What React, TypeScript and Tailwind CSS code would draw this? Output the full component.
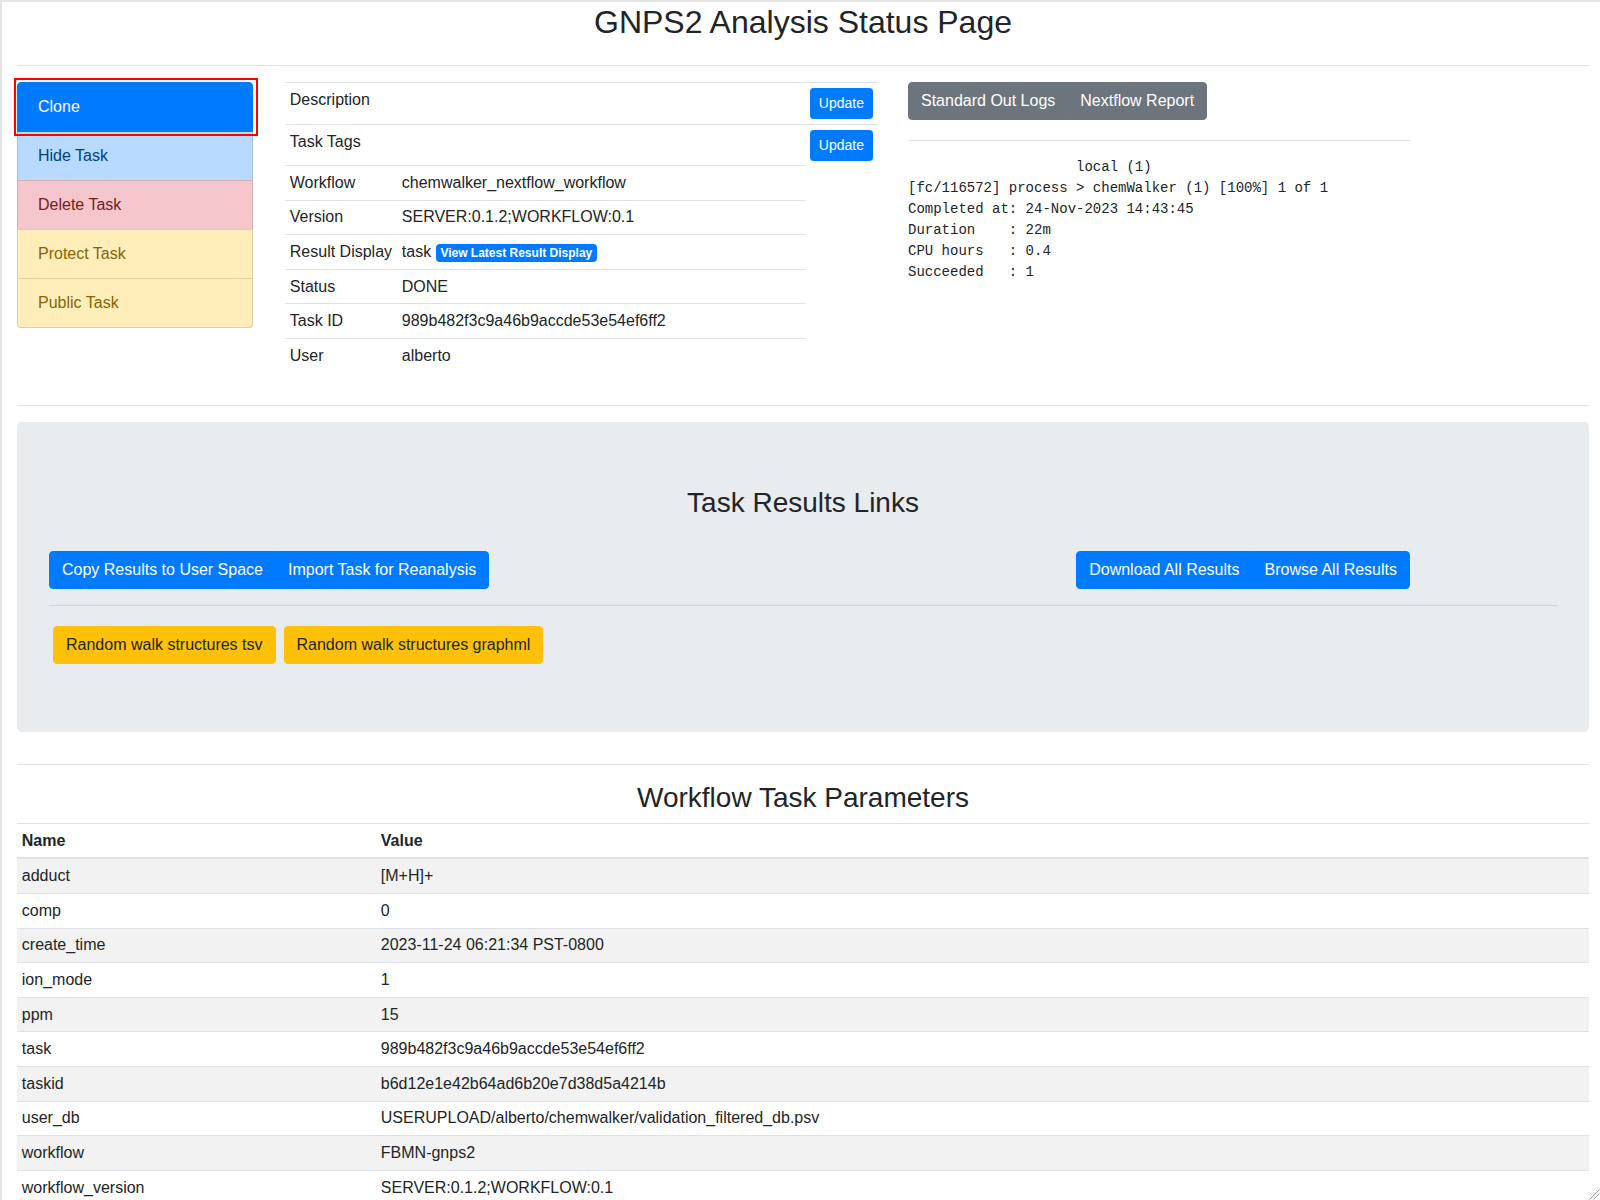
import React from "react";

const params: [string, string][] = [
  ["adduct", "[M+H]+"],
  ["comp", "0"],
  ["create_time", "2023-11-24 06:21:34 PST-0800"],
  ["ion_mode", "1"],
  ["ppm", "15"],
  ["task", "989b482f3c9a46b9accde53e54ef6ff2"],
  ["taskid", "b6d12e1e42b64ad6b20e7d38d5a4214b"],
  ["user_db", "USERUPLOAD/alberto/chemwalker/validation_filtered_db.psv"],
  ["workflow", "FBMN-gnps2"],
  ["workflow_version", "SERVER:0.1.2;WORKFLOW:0.1"],
];

const info: [string, React.ReactNode][] = [
  ["Workflow", "chemwalker_nextflow_workflow"],
  ["Version", "SERVER:0.1.2;WORKFLOW:0.1"],
  [
    "Result Display",
    <>
      task{" "}
      <a className="inline-block rounded-[4px] bg-[#007bff] px-[4.8px] py-[3px] align-baseline text-[12px] font-bold leading-none text-white">
        View Latest Result Display
      </a>
    </>,
  ],
  ["Status", "DONE"],
  ["Task ID", "989b482f3c9a46b9accde53e54ef6ff2"],
  ["User", "alberto"],
];

const logText = `                    local (1)
[fc/116572] process > chemWalker (1) [100%] 1 of 1
Completed at: 24-Nov-2023 14:43:45
Duration    : 22m
CPU hours   : 0.4
Succeeded   : 1`;

export default function App() {
  return (
    <div className="relative h-[1200px] overflow-hidden border-l-2 border-t-2 border-[#e4e4e4] bg-white font-['Liberation_Sans',Arial,sans-serif] text-[16px] leading-6 text-[#212529]">
      <div className="pl-[15px] pr-[11px]">
        <h2 className="mb-6 mt-px text-center text-[32px] font-normal leading-[1.2]">
          GNPS2 Analysis Status Page
        </h2>
        <hr className="my-4 border-0 border-t border-black/10" />

        <div className="flex items-start">
          {/* Left action list */}
          <div className="relative w-[236px] shrink-0">
            <div className="pointer-events-none absolute left-[-3px] top-[-4px] z-20 h-[58px] w-[244px] border-2 border-[#ff0000]" />
            <div className="flex flex-col">
              <div className="relative z-10 -mb-px rounded-t-[4px] border border-[#007bff] bg-[#007bff] px-5 py-3 text-white">
                Clone
              </div>
              <div className="-mb-px border border-black/[.125] bg-[#b8daff] px-5 py-3 text-[#004085]">
                Hide Task
              </div>
              <div className="-mb-px border border-black/[.125] bg-[#f5c6cb] px-5 py-3 text-[#721c24]">
                Delete Task
              </div>
              <div className="-mb-px border border-black/[.125] bg-[#ffeeba] px-5 py-3 text-[#856404]">
                Protect Task
              </div>
              <div className="rounded-b-[4px] border border-black/[.125] bg-[#ffeeba] px-5 py-3 text-[#856404]">
                Public Task
              </div>
            </div>
          </div>

          {/* Middle info table */}
          <table className="mb-4 ml-8 w-[593px] shrink-0 table-fixed border-collapse">
            <colgroup>
              <col className="w-[112px]" />
              <col className="w-[408px]" />
              <col className="w-[73px]" />
            </colgroup>
            <tbody>
              {["Description", "Task Tags"].map((l) => (
                <tr key={l}>
                  <td className="whitespace-nowrap border-t border-[#dee2e6] p-[0.3rem] align-top">{l}</td>
                  <td className="border-t border-[#dee2e6] p-[0.3rem] align-top"></td>
                  <td className="border-t border-[#dee2e6] p-[0.3rem] align-top">
                    <button className="rounded-[3.2px] border border-[#007bff] bg-[#007bff] px-2 py-1 text-[14px] leading-[21px] text-white">
                      Update
                    </button>
                  </td>
                </tr>
              ))}
              {info.map(([l, v]) => (
                <tr key={l}>
                  <td className="whitespace-nowrap border-t border-[#dee2e6] p-[0.3rem] align-top">{l}</td>
                  <td className="whitespace-nowrap border-t border-[#dee2e6] p-[0.3rem] align-top">{v}</td>
                </tr>
              ))}
            </tbody>
          </table>

          {/* Right logs */}
          <div className="ml-[30px] w-[503px] shrink-0">
            <div className="flex w-fit">
              <button className="rounded-l-[4px] border border-[#6c757d] bg-[#6c757d] px-3 py-1.5 leading-6 text-white">
                Standard Out Logs
              </button>
              <button className="-ml-px rounded-r-[4px] border border-[#6c757d] bg-[#6c757d] px-3 py-1.5 leading-6 text-white">
                Nextflow Report
              </button>
            </div>
            <hr className="mb-4 mt-5 border-0 border-t border-black/10" />
            <pre className="m-0 font-['Liberation_Mono','Courier_New',monospace] text-[14px] leading-[21px] text-[#212529]">
              {logText}
            </pre>
          </div>
        </div>

        <hr className="my-4 border-0 border-t border-black/10" />

        {/* Jumbotron */}
        <div className="mb-8 rounded-[4.8px] bg-[#e9ecef] px-8 py-16">
          <h3 className="mb-2 text-center text-[28px] font-normal leading-[1.2]">Task Results Links</h3>
          <div className="mt-8 flex items-start justify-between pr-[147px]">
            <div className="flex">
              <button className="rounded-l-[4px] border border-[#007bff] bg-[#007bff] px-3 py-1.5 leading-6 text-white">
                Copy Results to User Space
              </button>
              <button className="-ml-px rounded-r-[4px] border border-[#007bff] bg-[#007bff] px-3 py-1.5 leading-6 text-white">
                Import Task for Reanalysis
              </button>
            </div>
            <div className="flex">
              <button className="rounded-l-[4px] border border-[#007bff] bg-[#007bff] px-3 py-1.5 leading-6 text-white">
                Download All Results
              </button>
              <button className="-ml-px rounded-r-[4px] border border-[#007bff] bg-[#007bff] px-3 py-1.5 leading-6 text-white">
                Browse All Results
              </button>
            </div>
          </div>
          <hr className="my-4 border-0 border-t border-black/10" />
          <div className="flex gap-2 p-1">
            <button className="rounded-[4px] border border-[#ffc107] bg-[#ffc107] px-3 py-1.5 leading-6 text-[#212529]">
              Random walk structures tsv
            </button>
            <button className="rounded-[4px] border border-[#ffc107] bg-[#ffc107] px-3 py-1.5 leading-6 text-[#212529]">
              Random walk structures graphml
            </button>
          </div>
        </div>

        <hr className="my-4 border-0 border-t border-black/10" />
        <h3 className="mb-2 text-center text-[28px] font-normal leading-[1.2]">Workflow Task Parameters</h3>

        <table className="w-full table-fixed border-collapse">
          <colgroup>
            <col className="w-[359px]" />
            <col />
          </colgroup>
          <thead>
            <tr>
              <th className="border-b-2 border-t border-[#dee2e6] p-[0.3rem] text-left font-bold">Name</th>
              <th className="border-b-2 border-t border-[#dee2e6] p-[0.3rem] text-left font-bold">Value</th>
            </tr>
          </thead>
          <tbody>
            {params.map(([n, v], i) => (
              <tr key={n} className={i % 2 === 0 ? "bg-[#f2f2f2]" : "bg-white"}>
                <td className="border-t border-[#dee2e6] p-[0.3rem]">{n}</td>
                <td className="border-t border-[#dee2e6] p-[0.3rem]">{v}</td>
              </tr>
            ))}
          </tbody>
        </table>
      </div>

      {/* resize grip */}
      <svg className="absolute bottom-0 right-0" width="12" height="12" viewBox="0 0 12 12">
        <line x1="11.5" y1="1.5" x2="1.5" y2="11.5" stroke="#9a9a9a" strokeWidth="1" />
        <line x1="11.5" y1="5.5" x2="5.5" y2="11.5" stroke="#9a9a9a" strokeWidth="1" />
      </svg>
    </div>
  );
}
